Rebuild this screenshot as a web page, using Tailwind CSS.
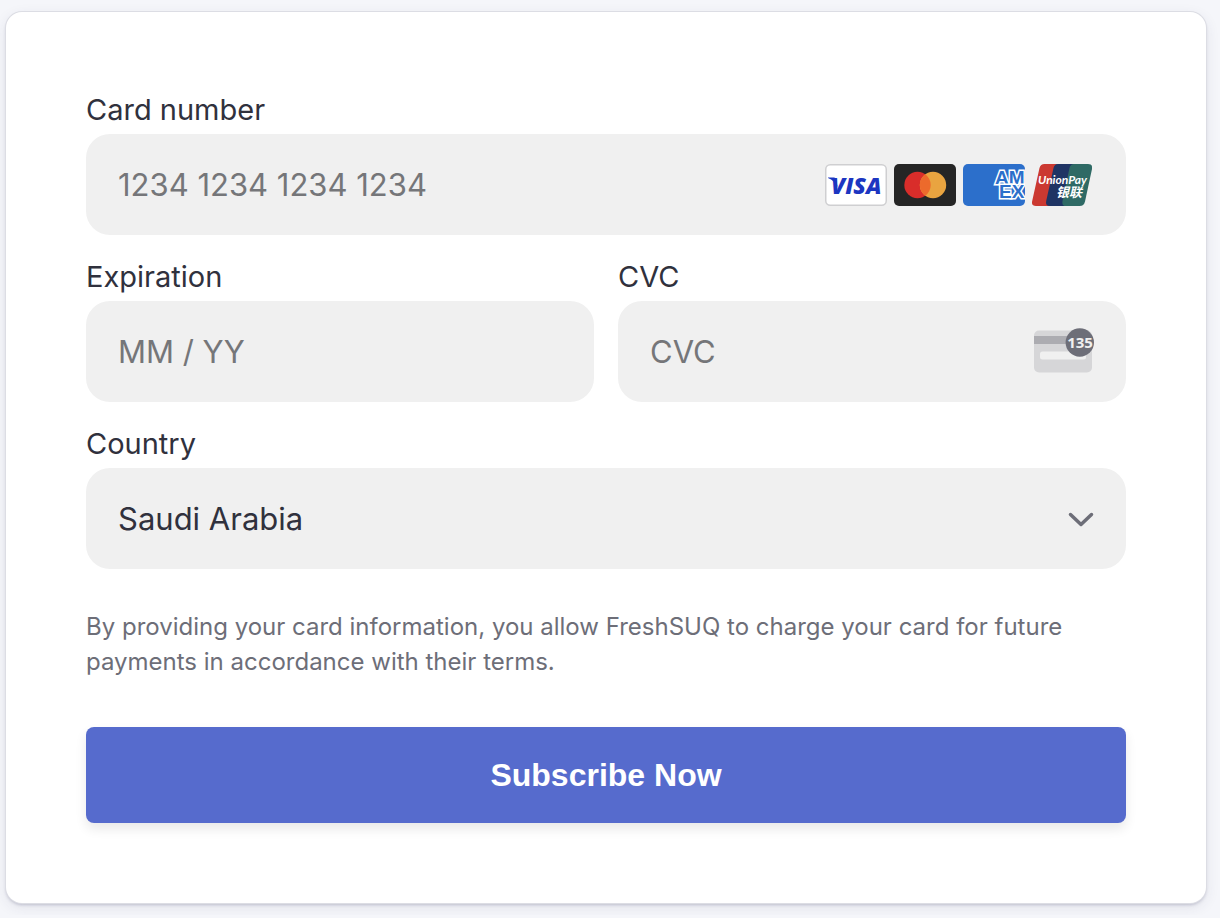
<!DOCTYPE html>
<html lang="en">
<head>
  <meta charset="utf-8">
  <meta name="viewport" content="width=device-width, initial-scale=1">
  <title>Subscribe</title>
  <script src="https://cdn.jsdelivr.net/npm/@tailwindcss/browser@4"></script>
</head>
<body class="bg-[#f5f6fa] pt-3 pl-1.5 pr-3.5 pb-3 font-['Inter','Liberation_Sans',sans-serif] text-[#30313d]">
  <form class="bg-white rounded-2xl p-20 shadow-[0_0_0_1px_#dcdde4,0_2px_3px_rgba(50,50,93,0.22),0_4px_14px_rgba(50,50,93,0.10)]">
    <div class="flex flex-col gap-6">
      <!-- Card number -->
      <div class="flex flex-col gap-1.5">
        <label for="number" class="text-[29px] leading-[36px]">Card number</label>
        <div class="relative">
          <input id="number" type="text" inputmode="numeric" placeholder="1234 1234 1234 1234"
            class="block w-full h-[101px] rounded-3xl bg-[#f0f0f0] pl-8 pr-[310px] text-[31px] placeholder:text-[#757679] outline-none">
          <div class="absolute inset-y-0 right-[34px] flex items-center gap-[7px] pointer-events-none">
            <svg class="w-[62px] h-[42px]" viewBox="0 0 62 42" role="img" aria-label="Visa">
              <rect x="0.75" y="0.75" width="60.5" height="40.5" rx="4.5" fill="#fff" stroke="#cfcfd1" stroke-width="1.5"/>
              <path d="M3 13.500h6q1.700 0 2 1.500l1.600 8Q9.500 16.500 3 14z" fill="#1c36c1"/>
              <text x="6" y="30" font-family="Open Sans" font-size="23" font-weight="800" font-style="italic" fill="#1c36c1">VISA</text>
            </svg>
            <svg class="w-[62px] h-[42px]" viewBox="0 0 62 42" role="img" aria-label="Mastercard">
              <rect width="62" height="42" rx="5" fill="#252525"/>
              <circle cx="23.500" cy="21" r="13.200" fill="#d92d2a"/>
              <circle cx="39" cy="21" r="13.200" fill="#e9a440"/>
              <path d="M31.250 10.300a13.200 13.200 0 0 1 0 21.400a13.200 13.200 0 0 1 0-21.400z" fill="#ec6a2c"/>
            </svg>
            <svg class="w-[62px] h-[42px]" viewBox="0 0 62 42" role="img" aria-label="American Express">
              <clipPath id="amex"><rect width="62" height="42" rx="5"/></clipPath>
              <g clip-path="url(#amex)">
                <rect width="62" height="42" fill="#2c6fcb"/>
                <text font-family="Liberation Sans" font-size="19" font-weight="700" fill="#2c6fcb" stroke="#fff" stroke-width="3" paint-order="stroke" stroke-linejoin="miter" stroke-miterlimit="3">
                  <tspan x="32" y="20">AM</tspan><tspan x="36" y="34">EX</tspan>
                </text>
              </g>
            </svg>
            <svg class="w-[60px] h-[42px]" viewBox="0 0 60 42" role="img" aria-label="UnionPay">
              <path d="M12.500 0H26L18 42H4Q-1 42 0.200 37L7.500 4Q8.500 0 12.500 0z" fill="#cb3931"/>
              <path d="M26 0H42L34 42H18Q13 42 14.200 37L21.500 4Q22.500 0 26 0z" fill="#1f3464"/>
              <path d="M42 0H56Q61 0 60 5L53 37.500Q52 42 47.500 42H34Q29.500 42 30.500 37L37.500 4Q38.500 0 42 0z" fill="#2f6a65"/>
              <text fill="#fff" font-weight="700" font-style="italic">
                <tspan x="6" y="20" font-family="Lato" font-size="12">UnionPay</tspan><tspan x="24" y="33" font-family="Noto Sans CJK SC" font-size="13">银联</tspan>
              </text>
            </svg>
          </div>
        </div>
      </div>

      <!-- Expiration / CVC -->
      <div class="grid grid-cols-2 gap-6">
        <div class="flex flex-col gap-1.5">
          <label for="expiry" class="text-[29px] leading-[36px]">Expiration</label>
          <input id="expiry" type="text" inputmode="numeric" placeholder="MM / YY"
            class="block w-full h-[101px] rounded-3xl bg-[#f0f0f0] px-8 text-[31px] placeholder:text-[#757679] outline-none">
        </div>
        <div class="flex flex-col gap-1.5">
          <label for="cvc" class="text-[29px] leading-[36px]">CVC</label>
          <div class="relative">
            <input id="cvc" type="text" inputmode="numeric" placeholder="CVC"
              class="block w-full h-[101px] rounded-3xl bg-[#f0f0f0] pl-8 pr-28 text-[31px] placeholder:text-[#757679] outline-none">
            <div class="absolute inset-y-0 right-8 flex items-center pointer-events-none">
              <svg class="w-[60px] h-[48px]" viewBox="0 0 60 48" aria-hidden="true">
                <rect y="2.500" width="58" height="42" rx="5" fill="#d6d6d8"/>
                <path d="M0 8h58v8H0z" fill="#acacb1"/>
                <rect x="6" y="23.500" width="46" height="8" rx="2.500" fill="#f0f0f0"/>
                <circle cx="45.800" cy="14.500" r="14.200" fill="#6d6e78"/>
                <text x="46" y="20" text-anchor="middle" font-family="Open Sans" font-size="15" font-weight="700" fill="#f0f0f0">135</text>
              </svg>
            </div>
          </div>
        </div>
      </div>

      <!-- Country -->
      <div class="flex flex-col gap-1.5">
        <label for="country" class="text-[29px] leading-[36px]">Country</label>
        <div class="relative">
          <select id="country" class="block w-full h-[101px] rounded-3xl bg-[#f0f0f0] pt-0.5 pl-8 pr-20 text-[31px] appearance-none outline-none">
            <option>Saudi Arabia</option>
          </select>
          <div class="absolute inset-y-0 right-8 flex items-center pointer-events-none">
            <svg class="w-[26px] h-[16px]" viewBox="0 0 26 16" fill="none" stroke="#6d6e78" stroke-width="3.500" stroke-linecap="round" stroke-linejoin="round" aria-hidden="true">
              <path d="M2.500 3.500L13 13.500L23.500 3.500"/>
            </svg>
          </div>
        </div>
      </div>
    </div>

    <p class="mt-10 text-[24px] leading-[35px] text-[#6d6e78]">
      By providing your card information, you allow FreshSUQ to charge your card for future payments in accordance with their terms.
    </p>

    <button type="submit" class="mt-12 w-full h-24 rounded-lg bg-[#566bcd] font-['Liberation_Sans',Arial,sans-serif] text-[32px] font-bold text-white shadow-[0_6px_12px_rgba(0,0,0,0.09)] cursor-pointer">
      Subscribe Now
    </button>
  </form>
</body>
</html>
